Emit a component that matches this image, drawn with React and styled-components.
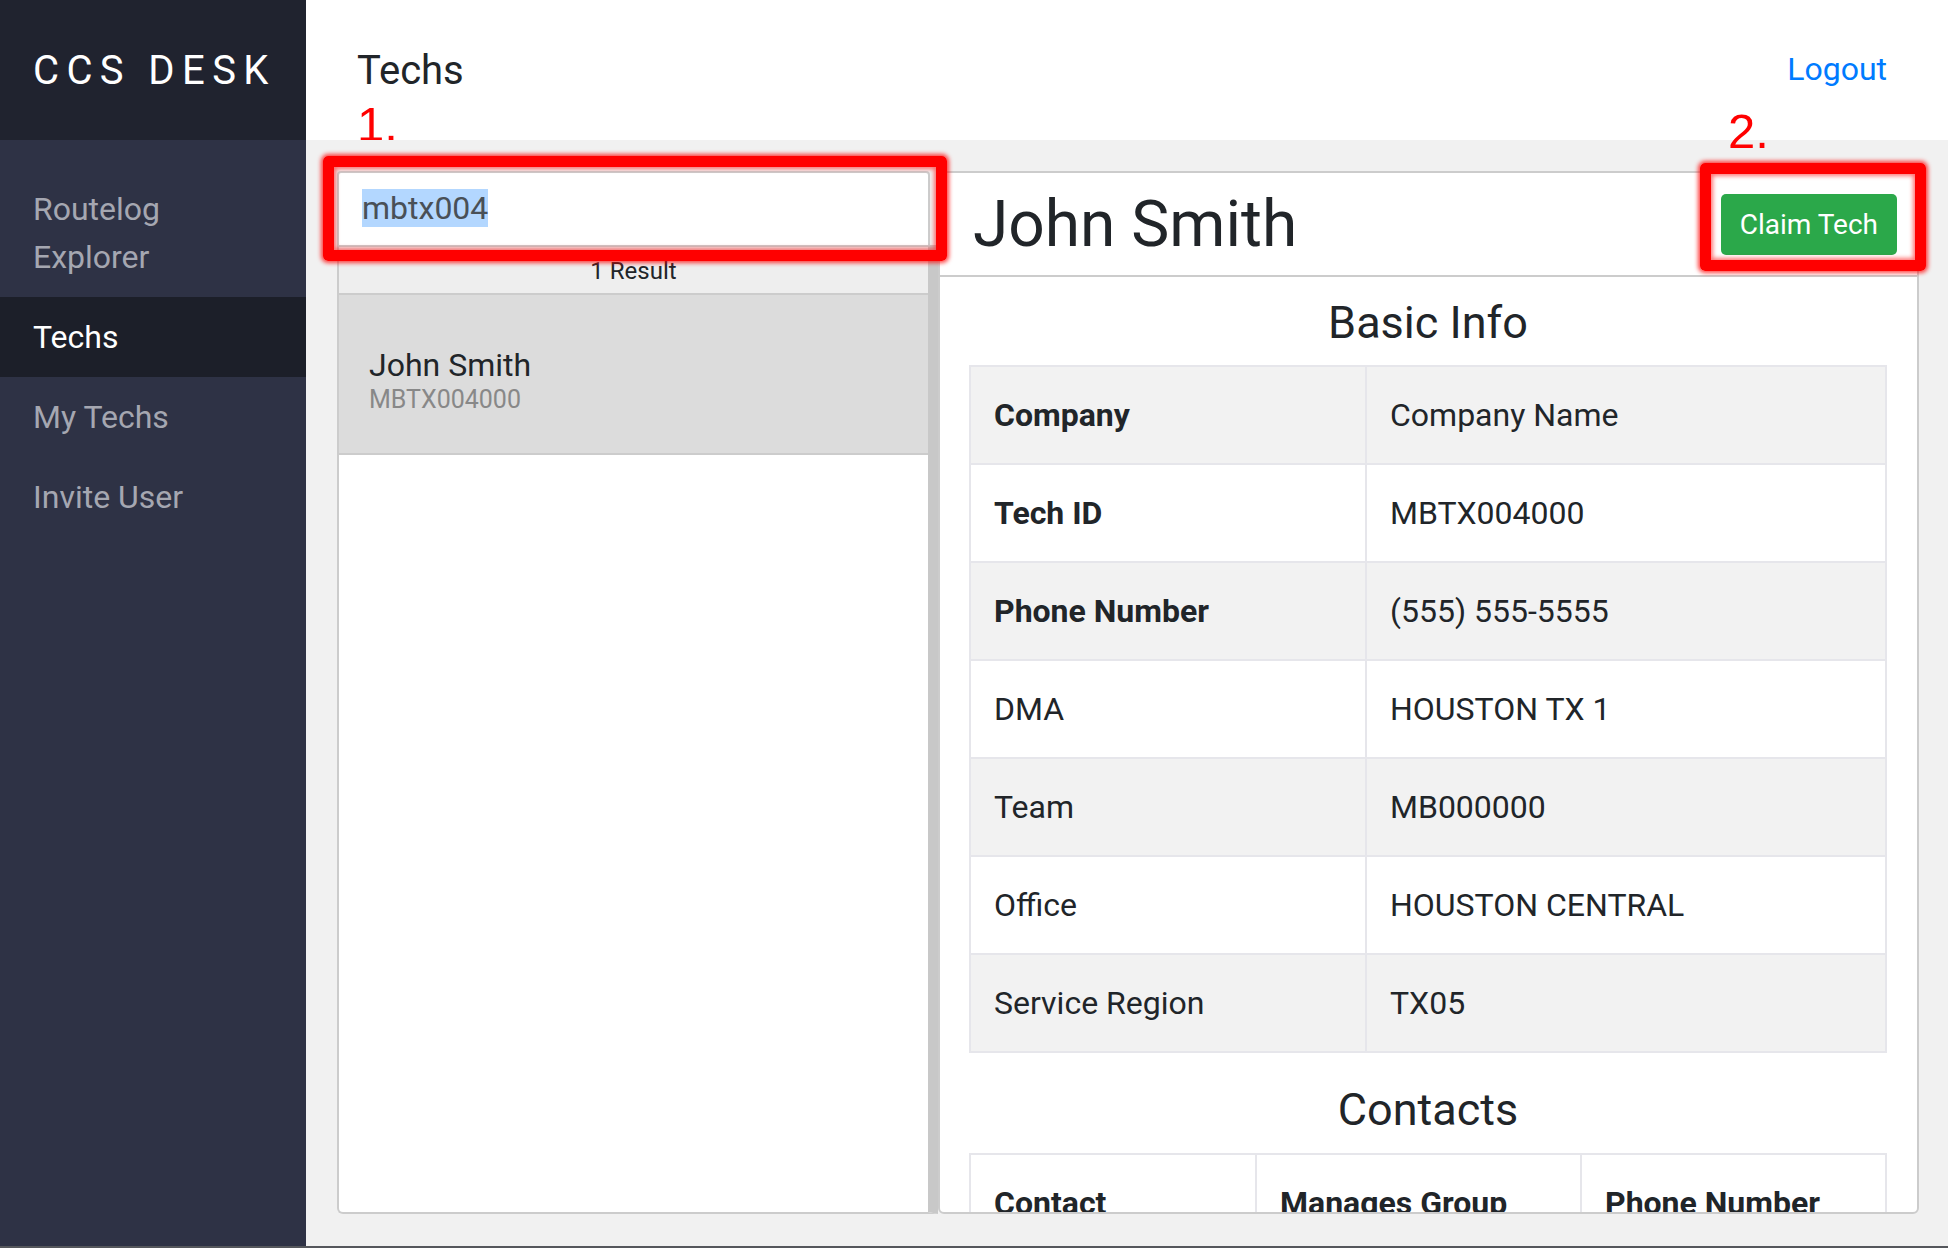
import React, { useEffect, useRef } from "react";
import styled, { createGlobalStyle } from "styled-components";

const GlobalStyle = createGlobalStyle`
  html, body { margin: 0; padding: 0; }
  body {
    font-family: Roboto, "Liberation Sans", Arial, sans-serif;
    color: #212529;
    background: #f1f1f1;
  }
  * { box-sizing: border-box; }
`;

const Layout = styled.div`
  display: flex;
  height: 1248px;
  border-bottom: 2px solid #55575c;
  overflow: hidden;
`;

const Sidebar = styled.aside`
  width: 306px;
  flex: none;
  display: flex;
  flex-direction: column;
  background: #2e3245;
`;

const Brand = styled.div`
  height: 140px;
  display: flex;
  align-items: center;
  padding-left: 33px;
  background: #20232f;
  color: #ffffff;
  font-size: 40px;
  font-weight: 400;
  letter-spacing: 7.4px;
  white-space: nowrap;
`;

const Nav = styled.nav`
  display: flex;
  flex-direction: column;
  padding-top: 29px;
`;

const NavItem = styled.a`
  display: block;
  padding: 16px 33px;
  font-size: 32px;
  line-height: 48px;
  color: ${(p) => (p.$active ? "#ffffff" : "#a5a7b1")};
  background: ${(p) => (p.$active ? "#1c1f29" : "transparent")};
  text-decoration: none;
  cursor: pointer;
`;

const Main = styled.main`
  flex: 1;
  min-width: 0;
  display: flex;
  flex-direction: column;
  position: relative;
`;

const Header = styled.header`
  height: 140px;
  flex: none;
  background: #ffffff;
  display: flex;
  justify-content: space-between;
  align-items: flex-start;
  padding: 45px 61px 0 51px;
  position: relative;
  overflow: hidden;
`;

const Title = styled.h1`
  margin: 2px 0 0;
  font-size: 40px;
  font-weight: 400;
  line-height: 48px;
  color: #212529;
`;

const LogoutLink = styled.a`
  font-size: 32px;
  line-height: 48px;
  color: #007bff;
  text-decoration: none;
  cursor: pointer;
`;

const StepNumber = styled.span`
  position: absolute;
  left: ${(p) => p.$left}px;
  top: ${(p) => p.$top}px;
  font-family: "Liberation Sans", Arial, sans-serif;
  font-size: 49px;
  line-height: 1;
  color: #ff0000;
  z-index: 3;
`;

const Frame = styled.div`
  position: absolute;
  left: ${(p) => p.$left}px;
  top: ${(p) => p.$top}px;
  width: ${(p) => p.$w}px;
  height: ${(p) => p.$h}px;
  border: 11px solid #ff0000;
  border-radius: 5px;
  box-shadow: 0 0 4px 2px rgba(255, 0, 0, 0.75),
    inset 0 0 4px 2px rgba(255, 0, 0, 0.55);
  pointer-events: none;
  z-index: 2;
`;

const Content = styled.div`
  flex: 1;
  min-height: 0;
  display: flex;
  padding: 31px 29px 32px 31px;
  background: #f1f1f1;
`;

const SearchColumn = styled.section`
  width: 601px;
  flex: none;
  display: flex;
  flex-direction: column;
`;

const SearchInput = styled.input`
  height: 76px;
  width: 593px;
  flex: none;
  border: 2px solid #cccccc;
  border-radius: 4px 4px 0 0;
  padding: 0 22px 2px 23px;
  font-family: Roboto, "Liberation Sans", Arial, sans-serif;
  font-size: 32px;
  color: #495057;
  background: #ffffff;
  outline: none;
  &::selection {
    background: #b3d7ff;
    color: #495057;
  }
`;

const ResultsPanel = styled.div`
  flex: 1;
  display: flex;
  flex-direction: column;
  background: #ffffff;
  border-left: 2px solid #cccccc;
  border-bottom: 2px solid #cccccc;
  border-right: 10px solid #c8c8c8;
  border-bottom-left-radius: 6px;
  margin-top: -2px;
`;

const ResultCount = styled.div`
  height: 50px;
  flex: none;
  background: #eeeeee;
  border-top: 2px solid #cccccc;
  border-bottom: 2px solid #cccccc;
  text-align: center;
  font-size: 24px;
  line-height: 48px;
  color: #212529;
`;

const ResultItem = styled.div`
  height: 160px;
  flex: none;
  padding: 51px 30px 0;
  background: #dcdcdc;
  border-bottom: 2px solid #cccccc;
`;

const ResultName = styled.div`
  font-size: 32px;
  line-height: 38px;
  color: #212529;
`;

const ResultId = styled.div`
  font-size: 25px;
  line-height: 31px;
  color: #888888;
`;

const DetailPanel = styled.section`
  flex: 1;
  min-width: 0;
  display: flex;
  flex-direction: column;
  background: #ffffff;
  border: 2px solid #cccccc;
  border-radius: 0 0 6px 6px;
  overflow: hidden;
`;

const DetailHeader = styled.div`
  height: 104px;
  flex: none;
  display: flex;
  align-items: center;
  justify-content: space-between;
  padding: 0 20px 0 33px;
  border-bottom: 2px solid #cccccc;
`;

const DetailName = styled.h2`
  margin: 2px 0 0;
  font-size: 64px;
  font-weight: 400;
  line-height: 78px;
  color: #212529;
`;

const ClaimButton = styled.button`
  height: 61px;
  padding: 0 19px;
  border: none;
  border-radius: 5px;
  background: #2ba84a;
  color: #ffffff;
  font-family: Roboto, "Liberation Sans", Arial, sans-serif;
  font-size: 28px;
  cursor: pointer;
`;

const DetailBody = styled.div`
  flex: 1;
  min-height: 0;
  overflow: hidden;
  padding: 0 30px 0 29px;
`;

const SectionTitle = styled.h3`
  margin: ${(p) => (p.$first ? "19px" : "30px")} 0 ${(p) => (p.$first ? "15px" : "16px")};
  font-size: 45px;
  font-weight: 400;
  line-height: 54px;
  text-align: center;
  color: #212529;
`;

const Table = styled.table`
  width: 100%;
  border-collapse: collapse;
  table-layout: fixed;
  border: 2px solid #e6e6eb;
`;

const Row = styled.tr`
  background: ${(p) => (p.$striped ? "#f2f2f2" : "#ffffff")};
`;

const Cell = styled.td`
  border: 2px solid #e6e6eb;
  padding: 24px 19px 24px 23px;
  font-size: 32px;
  line-height: 48px;
  font-weight: ${(p) => (p.$bold ? 700 : 400)};
  color: #212529;
  text-align: left;
  vertical-align: middle;
  white-space: nowrap;
  overflow: hidden;
`;

const HeadCell = styled.th`
  border: 2px solid #e6e6eb;
  padding: 24px 19px 24px 23px;
  font-size: 32px;
  line-height: 48px;
  font-weight: 700;
  text-align: left;
  color: #212529;
  white-space: nowrap;
`;

const basicInfo = [
  ["Company", "Company Name", true],
  ["Tech ID", "MBTX004000", true],
  ["Phone Number", "(555) 555-5555", true],
  ["DMA", "HOUSTON TX 1", false],
  ["Team", "MB000000", false],
  ["Office", "HOUSTON CENTRAL", false],
  ["Service Region", "TX05", false],
];

export default function App() {
  const inputRef = useRef(null);

  useEffect(() => {
    if (inputRef.current) {
      inputRef.current.focus();
      inputRef.current.select();
    }
  }, []);

  return (
    <>
      <GlobalStyle />
      <Layout>
        <Sidebar>
          <Brand>CCS DESK</Brand>
          <Nav>
            <NavItem>Routelog Explorer</NavItem>
            <NavItem $active>Techs</NavItem>
            <NavItem>My Techs</NavItem>
            <NavItem>Invite User</NavItem>
          </Nav>
        </Sidebar>

        <Main>
          <Header>
            <Title>Techs</Title>
            <LogoutLink>Logout</LogoutLink>
            <StepNumber $left={51} $top={100}>1.</StepNumber>
          </Header>

          <Content>
            <SearchColumn>
              <SearchInput ref={inputRef} defaultValue="mbtx004" />
              <ResultsPanel>
                <ResultCount>1 Result</ResultCount>
                <ResultItem>
                  <ResultName>John Smith</ResultName>
                  <ResultId>MBTX004000</ResultId>
                </ResultItem>
              </ResultsPanel>
            </SearchColumn>

            <DetailPanel>
              <DetailHeader>
                <DetailName>John Smith</DetailName>
                <ClaimButton>Claim Tech</ClaimButton>
              </DetailHeader>
              <DetailBody>
                <SectionTitle $first>Basic Info</SectionTitle>
                <Table>
                  <colgroup>
                    <col style={{ width: "396px" }} />
                    <col />
                  </colgroup>
                  <tbody>
                    {basicInfo.map(([label, value, bold], i) => (
                      <Row key={label} $striped={i % 2 === 0}>
                        <Cell $bold={bold}>{label}</Cell>
                        <Cell>{value}</Cell>
                      </Row>
                    ))}
                  </tbody>
                </Table>

                <SectionTitle>Contacts</SectionTitle>
                <Table>
                  <colgroup>
                    <col style={{ width: "286px" }} />
                    <col style={{ width: "325px" }} />
                    <col />
                  </colgroup>
                  <thead>
                    <tr>
                      <HeadCell>Contact</HeadCell>
                      <HeadCell>Manages Group</HeadCell>
                      <HeadCell>Phone Number</HeadCell>
                    </tr>
                  </thead>
                </Table>
              </DetailBody>
            </DetailPanel>
          </Content>

          <Frame $left={17} $top={156} $w={624} $h={105} />
          <Frame $left={1394} $top={163} $w={226} $h={108} />
          <StepNumber $left={1422} $top={107}>2.</StepNumber>
        </Main>
      </Layout>
    </>
  );
}
